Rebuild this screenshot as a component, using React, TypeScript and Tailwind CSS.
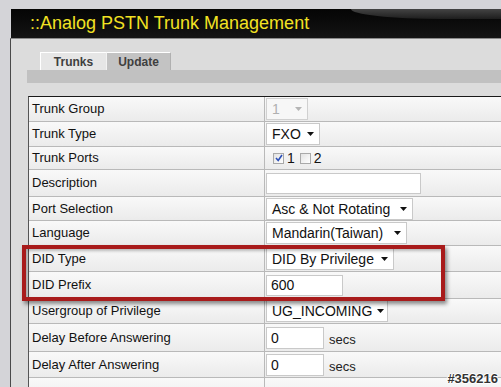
import React from "react";

const Arrow: React.FC<{ gray?: boolean }> = ({ gray }) => (
  <svg width="7" height="4" viewBox="0 0 7 4" className="shrink-0">
    <polygon points="0,0 7,0 3.5,4" fill={gray ? "#b5b5b5" : "#111"} />
  </svg>
);

const Select: React.FC<{ value: string; w: string; disabled?: boolean }> = ({ value, w, disabled }) => (
  <div
    className={
      "flex h-[22px] items-center justify-between gap-[5px] border pl-[5px] pr-[5px] text-[14px] leading-none " +
      w +
      (disabled ? " border-[#d0d0d0] bg-[#f7f7f7] text-[#b0b0b0]" : " border-[#c9c9c9] bg-white text-[#111]")
    }
  >
    <span className="whitespace-nowrap">{value}</span>
    <Arrow gray={disabled} />
  </div>
);

const TextBox: React.FC<{ value?: string; w: string }> = ({ value = "", w }) => (
  <div
    className={
      "flex h-[21px] items-center border border-[#c9c9c9] bg-white pl-[4px] text-[14px] leading-none text-[#111] " + w
    }
  >
    {value}
  </div>
);

const Check: React.FC<{ on?: boolean }> = ({ on }) => (
  <div className="flex h-[11px] w-[11px] items-center justify-center border border-[#a9a9a9] bg-gradient-to-br from-[#e2e2e2] to-white">
    {on && (
      <svg width="8" height="8" viewBox="0 0 8 8">
        <path d="M1 4 L3.2 6.5 L7 1" stroke="#2b4fb8" strokeWidth="1.6" fill="none" />
      </svg>
    )}
  </div>
);

type Row = { label: string; h: string; node?: React.ReactNode };

const rows: Row[] = [
  { label: "Trunk Group", h: "h-[25px]", node: <Select value="1" w="w-[42px]" disabled /> },
  { label: "Trunk Type", h: "h-[25px]", node: <Select value="FXO" w="w-[54px]" /> },
  {
    label: "Trunk Ports",
    h: "h-[23px]",
    node: (
      <div className="flex items-center pl-[7px] text-[14px] leading-none text-[#111]">
        <Check on />
        <span className="ml-[3px] mr-[5px]">1</span>
        <Check />
        <span className="ml-[3px]">2</span>
      </div>
    ),
  },
  { label: "Description", h: "h-[27px]", node: <TextBox w="w-[155px]" /> },
  { label: "Port Selection", h: "h-[24px]", node: <Select value="Asc & Not Rotating" w="w-[147px]" /> },
  { label: "Language", h: "h-[25px]", node: <Select value="Mandarin(Taiwan)" w="w-[141px]" /> },
  { label: "DID Type", h: "h-[26px]", node: <Select value="DID By Privilege" w="w-[128px]" /> },
  { label: "DID Prefix", h: "h-[27px]", node: <TextBox value="600" w="w-[77px]" /> },
  { label: "Usergroup of Privilege", h: "h-[25px]", node: <Select value="UG_INCOMING" w="w-[122px]" /> },
  {
    label: "Delay Before Answering",
    h: "h-[28px]",
    node: (
      <div className="flex items-center">
        <TextBox value="0" w="w-[58px] h-[22px]" />
        <span className="ml-[5px] mt-[4px] text-[13px] text-[#222]">secs</span>
      </div>
    ),
  },
  {
    label: "Delay After Answering",
    h: "h-[26px]",
    node: (
      <div className="flex items-center">
        <TextBox value="0" w="w-[58px] h-[22px]" />
        <span className="ml-[5px] mt-[4px] text-[13px] text-[#222]">secs</span>
      </div>
    ),
  },
  { label: "", h: "h-[26px]" },
];

const App: React.FC = () => {
  return (
    <div className="relative h-[387px] w-[501px] overflow-hidden bg-[#d4d4d8] pl-[10px] pt-[9px] font-['Liberation_Sans',Arial,sans-serif]">
      {/* header bar */}
      <div className="relative ml-[1px] h-[29px] overflow-hidden bg-gradient-to-b from-[#050505] to-[#141414]">
        <div className="absolute right-0 top-0 h-[10px] w-[150px] rounded-bl-[90px_10px] bg-gradient-to-b from-[#444] to-[#1e1e1e]" />
        <div className="relative pl-[19px] pt-[3px] text-[18px] leading-[22px] text-[#f2e223]">
          ::Analog PSTN Trunk Management
        </div>
      </div>
      <div className="h-full border-l border-[#4a4a4a] border-t border-t-[#8a8a8a] bg-[#dcdcdc] pt-[13px]">
        {/* tabs */}
        <div className="flex pl-[29px]">
          <div className="flex h-[18px] w-[66px] items-center justify-center border-l border-t border-white bg-[#e6e6e6] text-[12px] font-bold text-[#3f3f3f]">
            Trunks
          </div>
          <div className="flex h-[18px] w-[65px] items-center justify-center border-l border-t border-r border-l-[#f2f2f2] border-t-white border-r-[#b0b0b0] bg-[#c3c3c3] text-[12px] font-bold text-[#3f3f3f]">
            Update
          </div>
        </div>
        <div className="ml-[16px] h-[13px] bg-[#c1c1c1]" />
        {/* form table */}
        <div className="ml-[17px] mt-[13px] border-l border-t border-l-[#555] border-t-[#1a1a1a]">
          {rows.map((r, i) => (
            <div
              key={i}
              className={"flex border-b border-[#b9b9b9] bg-gradient-to-b from-[#f9f9f9] to-[#ebebeb] " + r.h}
            >
              <div className="flex w-[236px] shrink-0 items-center border-r border-[#b9b9b9] pl-[3px] text-[13px] text-[#111]">
                {r.label}
              </div>
              <div className="flex flex-1 items-center pl-[1px]">{r.node}</div>
            </div>
          ))}
        </div>
      </div>

      {/* red highlight frame */}
      <div className="absolute left-[22px] top-[245px] h-[56px] w-[423px] border-[4px] border-[#a81b1b] shadow-[2px_3px_4px_rgba(0,0,0,0.45),inset_2px_2px_3px_rgba(0,0,0,0.25)]" />

      {/* watermark */}
      <div className="absolute bottom-[2px] right-[3px] text-[13px] font-bold leading-none text-[#333] [text-shadow:1px_0_0_#fff,-1px_0_0_#fff,0_1px_0_#fff,0_-1px_0_#fff]">
        #356216
      </div>
    </div>
  );
};

export default App;
